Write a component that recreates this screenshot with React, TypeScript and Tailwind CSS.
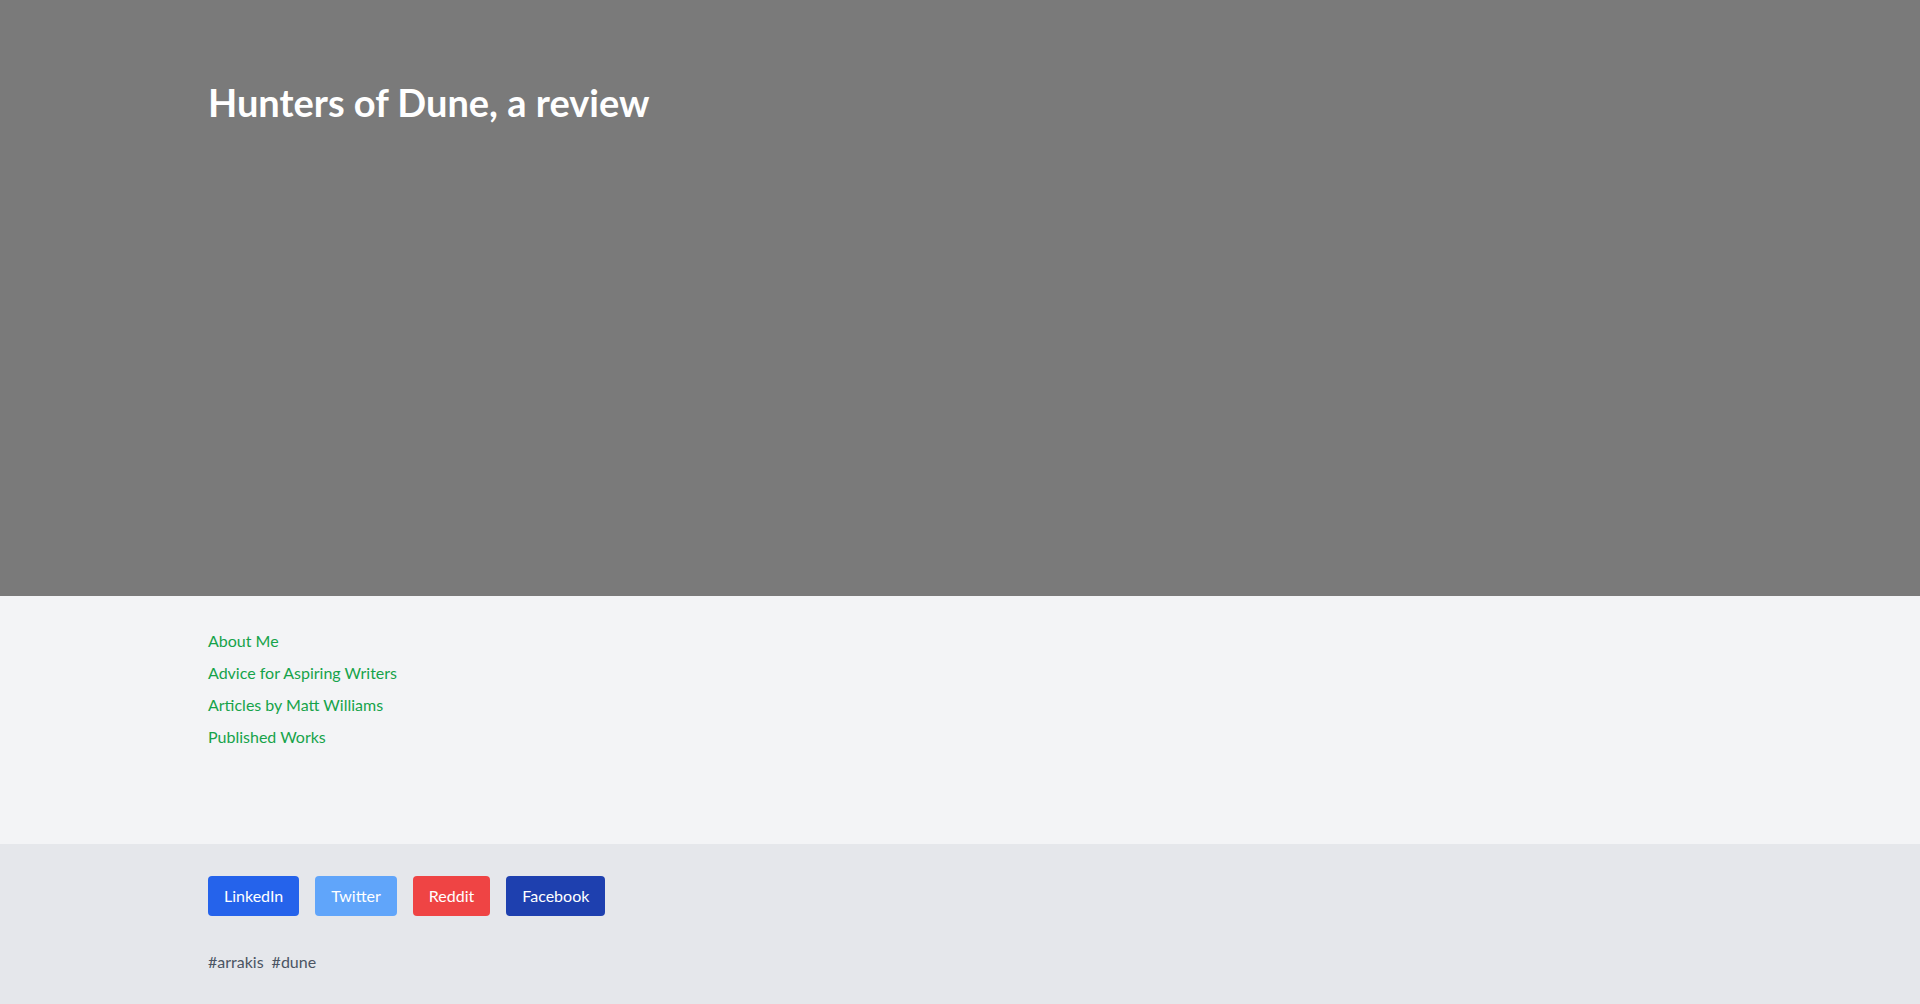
export default function App() {
  const links = [
    "About Me",
    "Advice for Aspiring Writers",
    "Articles by Matt Williams",
    "Published Works",
  ];
  const shares = [
    { label: "LinkedIn", cls: "bg-[#2563eb]" },
    { label: "Twitter", cls: "bg-[#60a5fa]" },
    { label: "Reddit", cls: "bg-[#ef4444]" },
    { label: "Facebook", cls: "bg-[#1e40af]" },
  ];

  return (
    <div className="min-h-screen bg-[#e5e7eb] font-['Lato','Noto_Sans',sans-serif]">
      {/* Hero */}
      <header className="h-[596px] bg-[#7a7a7a]">
        <div className="mx-auto max-w-[1536px] px-4 pt-[82px]">
          <h1 className="text-[38px] font-bold leading-10 text-white">Hunters of Dune, a review</h1>
        </div>
      </header>

      {/* Nav links */}
      <nav className="h-[248px] bg-[#f3f4f6]">
        <ul className="mx-auto flex max-w-[1536px] flex-col gap-2 px-4 pt-[33px]">
          {links.map((l) => (
            <li key={l}>
              <a href="#" className="text-base leading-6 text-[#16a34a] hover:underline">
                {l}
              </a>
            </li>
          ))}
        </ul>
      </nav>

      {/* Footer */}
      <footer className="bg-[#e5e7eb] pb-10">
        <div className="mx-auto max-w-[1536px] px-4 pt-8">
          <div className="flex gap-4">
            {shares.map((s) => (
              <button key={s.label} className={`rounded px-4 py-2 text-base leading-6 text-white ${s.cls}`}>
                {s.label}
              </button>
            ))}
          </div>
          <div className="mt-[34px] flex gap-2 text-base leading-6 text-[#4b5563]">
            <span>#arrakis</span>
            <span>#dune</span>
          </div>
        </div>
      </footer>
    </div>
  );
}
